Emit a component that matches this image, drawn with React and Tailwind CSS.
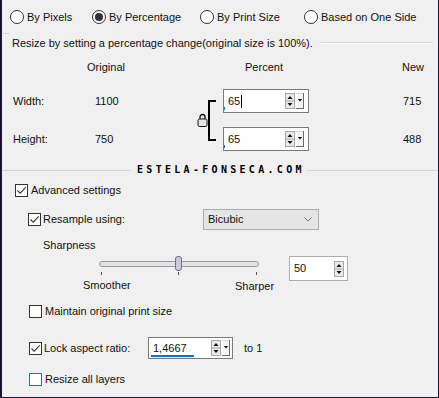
import React from "react";

function Radio({ checked, label, w }) {
  return (
    <div className={`flex items-center ${w}`}>
      <span className="w-[14px] h-[14px] rounded-full border border-[#333] bg-white flex items-center justify-center shrink-0">
        {checked && <span className="w-[8px] h-[8px] rounded-full bg-[#333]" />}
      </span>
      <span className="ml-[3px] whitespace-nowrap">{label}</span>
    </div>
  );
}

function Check({ checked, blue }) {
  return (
    <span
      className={`w-[13px] h-[13px] border ${blue ? "border-[#0078d7]" : "border-[#333]"} bg-white flex items-center justify-center shrink-0`}
    >
      {checked && (
        <svg width="11" height="11" viewBox="0 0 11 11">
          <path d="M1.5 5.5 L4.2 8.2 L9.7 2.3" stroke="#333" strokeWidth="1.1" fill="none" />
        </svg>
      )}
    </span>
  );
}

function SpinDrop({ drop = true }) {
  return (
    <svg width={drop ? 19 : 10} height="16" viewBox={drop ? "0 0 19 16" : "0 0 10 16"} className="shrink-0">
      <rect x="0.5" y="0.5" width="9" height="15" fill="#e9e9e9" stroke="#a8a8a8" />
      <line x1="1" y1="8" x2="9" y2="8" stroke="#a8a8a8" />
      <path d="M2.5 6 L5 3 L7.5 6 Z" fill="#111" />
      <path d="M2.5 10 L5 13 L7.5 10 Z" fill="#111" />
      {drop && (
        <g>
          <rect x="11" y="0" width="7" height="16" fill="#f3f3f3" />
          <line x1="11.5" y1="0" x2="11.5" y2="16" stroke="#ffffff" />
          <line x1="18.5" y1="0" x2="18.5" y2="16" stroke="#6a6a6a" />
          <line x1="11" y1="15.5" x2="19" y2="15.5" stroke="#6a6a6a" />
          <line x1="11" y1="0.5" x2="18" y2="0.5" stroke="#d8d8d8" />
          <path d="M12.8 6 L15 8.5 L17.2 6 Z" fill="#111" />
        </g>
      )}
    </svg>
  );
}

function Lock() {
  return (
    <svg width="11" height="14" viewBox="0 0 11 14">
      <path d="M3 6.5 V4 a2.5 2.5 0 0 1 5 0 V6.5" stroke="#111" strokeWidth="1.3" fill="none" />
      <rect x="1" y="6" width="9" height="7.5" rx="1.6" fill="#e4e4e4" stroke="#111" strokeWidth="1" />
    </svg>
  );
}

export default function App() {
  return (
    <div className="w-[439px] h-[398px] bg-[#f0f0f0] border-l-2 border-r border-b border-[#1b1535] font-['Liberation_Sans',Arial,sans-serif] text-[11px] text-[#111] leading-none overflow-hidden flex flex-col">
      {/* radios */}
      <div className="mt-[10px] h-[14px] flex items-center ml-[8px]">
        <Radio label="By Pixels" w="w-[82px]" />
        <Radio label="By Percentage" checked w="w-[108px]" />
        <Radio label="By Print Size" w="w-[104px]" />
        <Radio label="Based on One Side" w="w-[120px]" />
      </div>

      {/* description */}
      <div className="mt-[11px] h-[16px] flex items-center">
        <div className="w-[7px] h-px bg-[#d5d5d5] self-start mt-[-2px] ml-[1px]" />
        <span className="ml-[2px] whitespace-nowrap">
          Resize by setting a percentage change(original size is 100%).
        </span>
        <div className="flex-1 ml-[8px] mr-[5px] h-[2px] border-t border-[#d5d5d5] border-b-white bg-white" />
      </div>

      {/* headers */}
      <div className="mt-[8px] h-[16px] flex items-center">
        <div className="ml-[74px] w-[60px] text-center">Original</div>
        <div className="ml-[98px] w-[60px] text-center">Percent</div>
        <div className="ml-[99px] w-[40px] text-center">New</div>
      </div>

      {/* table */}
      <div className="mt-[14px] h-[62px] flex">
        <div className="ml-[11px] w-[82px] flex flex-col justify-between">
          <div className="h-[24px] flex items-center">Width:</div>
          <div className="h-[24px] flex items-center">Height:</div>
        </div>
        <div className="w-[101px] flex flex-col justify-between">
          <div className="h-[24px] flex items-center">1100</div>
          <div className="h-[24px] flex items-center">750</div>
        </div>
        <div className="w-[12px] flex items-center justify-center">
          <Lock />
        </div>
        <div className="w-[8px] self-start mt-[11px] h-[41px] border-l-2 border-y-2 border-black" />
        <div className="ml-[7px] w-[86px] flex flex-col justify-between">
          <div className="relative h-[24px] bg-white border border-[#7a7a7a] flex items-center pl-[4px] pr-[4px]">
            <span className="flex-1 flex items-center">
              65<span className="inline-block w-px h-[13px] bg-black ml-px" />
            </span>
            <SpinDrop />
            <span className="absolute left-0 bottom-[2px] w-px h-[3px] bg-[#0078d7]" />
          </div>
          <div className="relative h-[24px] bg-white border border-[#7a7a7a] flex items-center pl-[4px] pr-[4px]">
            <span className="flex-1">65</span>
            <SpinDrop />
            <span className="absolute left-0 bottom-[2px] w-px h-[3px] bg-[#0078d7]" />
          </div>
        </div>
        <div className="ml-[94px] flex flex-col justify-between">
          <div className="h-[24px] flex items-center">715</div>
          <div className="h-[24px] flex items-center">488</div>
        </div>
      </div>

      {/* watermark separator */}
      <div className="mt-[13px] h-[12px] flex items-center">
        <div className="w-[129px] h-px bg-[#d5d5d5]" />
        <span className="ml-[6px] font-['DejaVu_Sans_Mono',monospace] font-bold text-[10px] tracking-[3.3px] text-black whitespace-nowrap">
          ESTELA-FONSECA.COM
        </span>
        <div className="flex-1 ml-[2px] h-px bg-[#d5d5d5]" />
      </div>

      {/* advanced */}
      <div className="mt-[6px] h-[16px] flex items-center ml-[13px]">
        <Check checked />
        <span className="ml-[3px]">Advanced settings</span>
      </div>

      {/* resample */}
      <div className="mt-[11px] h-[21px] flex items-center">
        <div className="ml-[26px] w-[175px] flex items-center">
          <Check checked />
          <span className="ml-[2px]">Resample using:</span>
        </div>
        <div className="w-[116px] h-[21px] bg-[#e5e5e5] border border-[#adadad] flex items-center pl-[4px] pr-[6px]">
          <span className="flex-1">Bicubic</span>
          <svg width="8" height="5" viewBox="0 0 8 5">
            <path d="M0.5 0.5 L4 4 L7.5 0.5" stroke="#777" strokeWidth="1" fill="none" />
          </svg>
        </div>
      </div>

      {/* sharpness */}
      <div className="mt-[7px] h-[16px] flex items-center ml-[41px]">Sharpness</div>

      {/* slider */}
      <div className="mt-[3px] h-[36px] flex items-start">
        <div className="ml-[81px] w-[206px] h-[36px] relative">
          <div className="absolute left-[16px] top-[5px] w-[160px] h-[6px] rounded-full border border-[#9a9a9a] bg-[#e4e4e4]" />
          <div className="absolute left-[92px] top-0 w-[7px] h-[15px] rounded-[3px] border border-[#70708a] bg-[#c9cadf]" />
          <div className="absolute left-[18px] top-[16px] w-px h-[3px] bg-[#555]" />
          <div className="absolute left-[95px] top-[16px] w-px h-[3px] bg-[#555]" />
          <div className="absolute left-[173px] top-[16px] w-px h-[3px] bg-[#555]" />
          <div className="absolute left-0 top-[22px] h-[14px] flex items-center">Smoother</div>
          <div className="absolute left-[152px] top-[23px] h-[14px] flex items-center">Sharper</div>
        </div>
        <div className="w-[59px] h-[25px] bg-white border border-[#adadad] flex items-center pl-[4px] pr-[3px]">
          <span className="flex-1">50</span>
          <SpinDrop drop={false} />
        </div>
      </div>

      {/* maintain */}
      <div className="mt-[11px] h-[16px] flex items-center ml-[27px]">
        <Check />
        <span className="ml-[3px]">Maintain original print size</span>
      </div>

      {/* lock */}
      <div className="mt-[18px] h-[22px] flex items-center">
        <div className="ml-[27px] w-[119px] flex items-center">
          <Check checked />
          <span className="ml-[2px]">Lock aspect ratio:</span>
        </div>
        <div className="relative w-[85px] h-[22px] bg-white border border-[#7a7a7a] flex items-center pl-[4px] pr-[2px]">
          <span className="flex-1">1,4667</span>
          <SpinDrop />
          <span className="absolute left-[2px] bottom-[1px] w-[43px] h-[2px] bg-[#0078d7]" />
        </div>
        <span className="ml-[11px]">to 1</span>
      </div>

      {/* resize */}
      <div className="mt-[12px] h-[16px] flex items-center ml-[27px]">
        <Check blue />
        <span className="ml-[3px]">Resize all layers</span>
      </div>
    </div>
  );
}
